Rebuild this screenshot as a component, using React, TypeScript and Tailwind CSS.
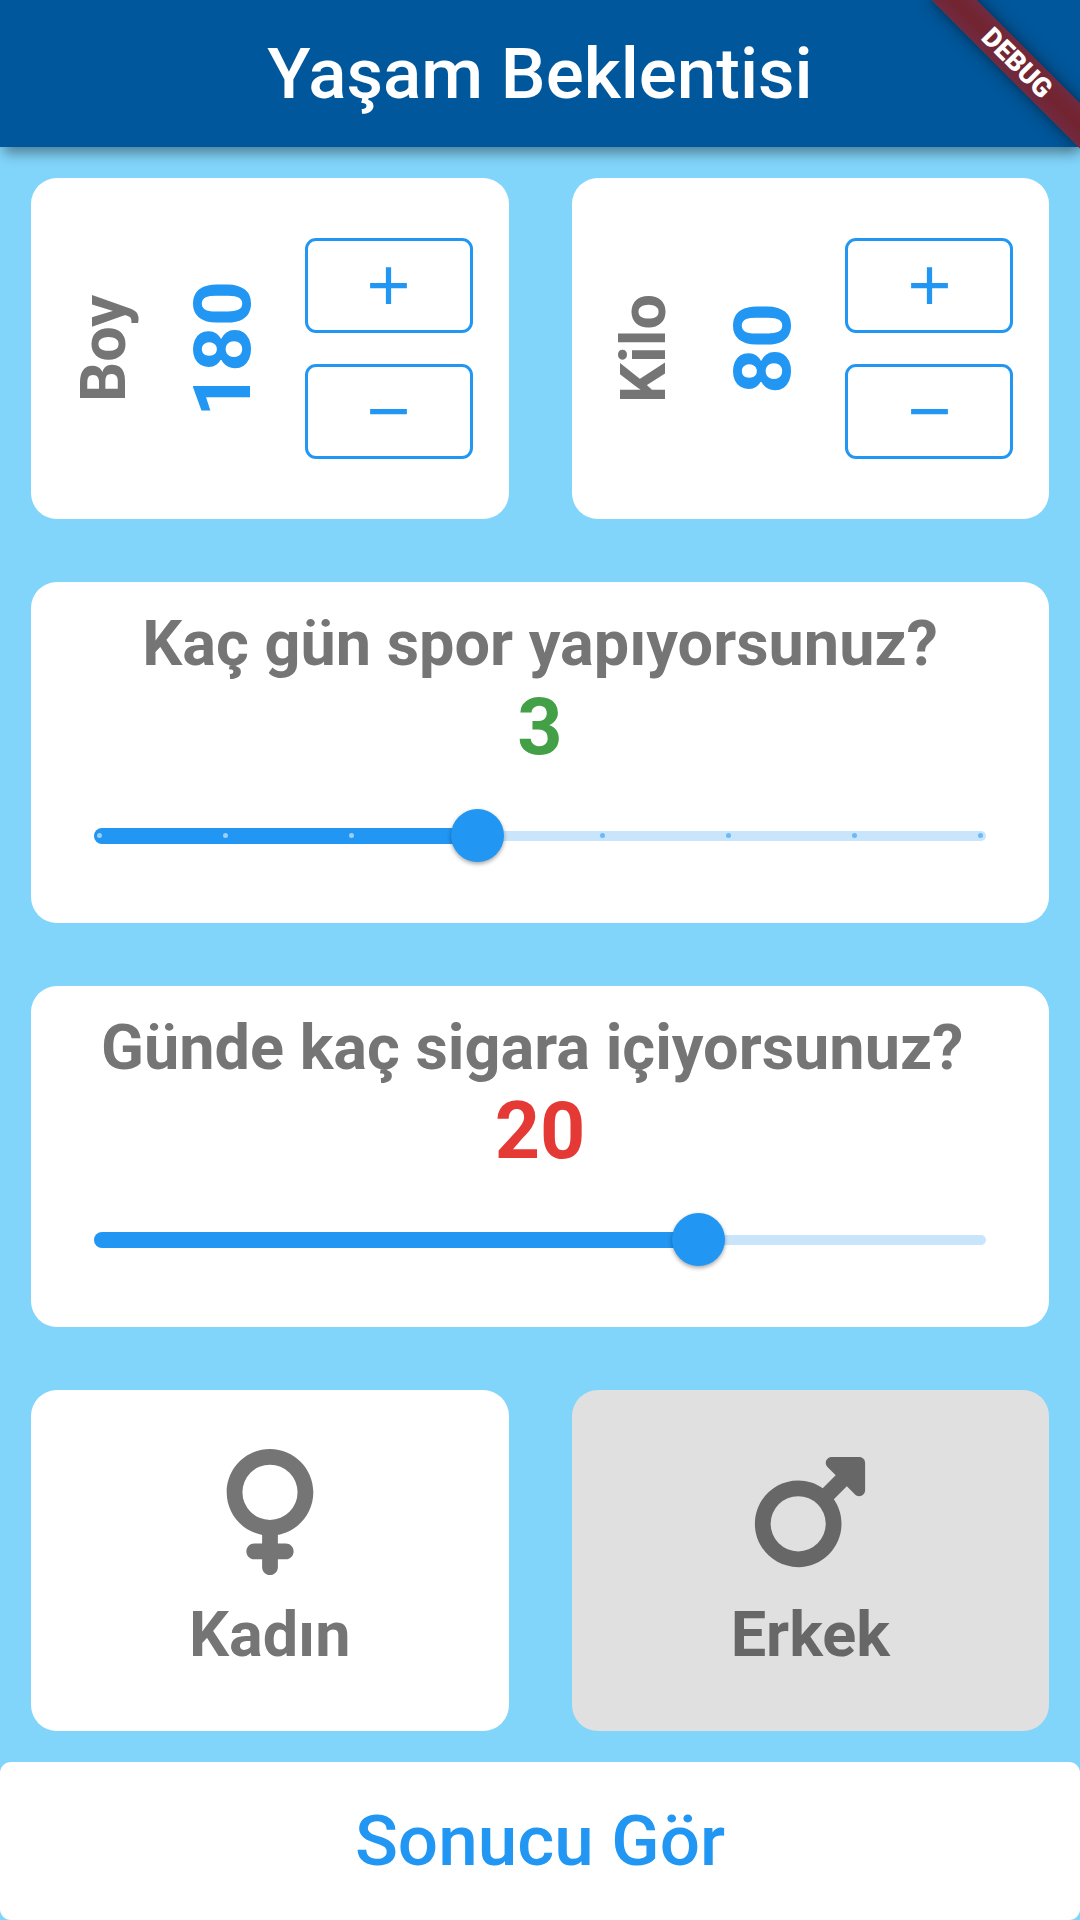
import { useState } from "react";
import type { ReactNode } from "react";
import { FaMars, FaVenus } from "react-icons/fa6";
import { MdAdd, MdRemove } from "react-icons/md";

const card = "rounded-[26px] bg-white";
const stepButton =
  "flex h-[95px] w-[168px] items-center justify-center rounded-[11px] border-[3px] border-[#2196f3] text-[63px] text-[#2196f3]";

function DebugBanner() {
  return (
    <div className="pointer-events-none absolute -right-[42px] top-[47px] z-20 flex h-8 w-[210px] rotate-45 items-center justify-center bg-linear-to-b from-[#712a40] via-[#72242f] to-[#712a40] text-[27px] leading-8 font-black text-white shadow-[0_0_16px_rgba(0,0,0,0.5)]">
      DEBUG
    </div>
  );
}

function Stepper({ label, initial }: { label: string; initial: number }) {
  const [value, setValue] = useState(initial);
  return (
    <section className={`flex items-center justify-evenly ${card}`}>
      <h2 className="rotate-180 text-[63px] leading-[74px] font-bold text-[#757575] [writing-mode:vertical-rl]">
        {label}
      </h2>
      <output className="rotate-180 text-[79px] leading-[92px] font-bold text-[#2196f3] [writing-mode:vertical-rl]">
        {value}
      </output>
      <div className="flex flex-col gap-[31px]">
        <button type="button" aria-label={`${label} artır`} className={stepButton} onClick={() => setValue(value + 1)}>
          <MdAdd />
        </button>
        <button type="button" aria-label={`${label} azalt`} className={stepButton} onClick={() => setValue(value - 1)}>
          <MdRemove />
        </button>
      </div>
    </section>
  );
}

type SliderCardProps = {
  id: string;
  label: string;
  initial: number;
  max: number;
  step: number | "any";
  valueClass: string;
  ticks?: boolean;
};

function SliderCard({ id, label, initial, max, step, valueClass, ticks }: SliderCardProps) {
  const [value, setValue] = useState(initial);
  return (
    <section className={`flex flex-col items-center justify-center px-[42px] ${card}`}>
      <label
        htmlFor={id}
        className="text-center text-[63px] leading-[74px] font-bold whitespace-pre text-[#757575]"
      >
        {label}
      </label>
      <output htmlFor={id} className={`text-[79px] leading-[92px] font-bold ${valueClass}`}>
        {Math.round(value)}
      </output>
      <div className="grid h-[126px] w-full items-center *:[grid-area:1/1]">
        <div className="mx-[21px] h-[10px] rounded-full bg-[#c9e5fc]" />
        <div className="mx-[21px]">
          <div className="h-4 rounded-l-full bg-[#2196f3]" style={{ width: `${(value / max) * 100}%` }} />
        </div>
        {ticks && (
          <div className="mx-[21px] flex justify-between px-[3px]">
            {Array.from({ length: max + 1 }, (_, i) => (
              <span key={i} className={`size-[5px] rounded-full ${i <= value ? "bg-[#99cffa]" : "bg-[#6db9f7]"}`} />
            ))}
          </div>
        )}
        <input
          id={id}
          type="range"
          min={0}
          max={max}
          step={step}
          value={value}
          onChange={(e) => setValue(Number(e.target.value))}
          className="h-[53px] w-full appearance-none bg-transparent [&::-webkit-slider-thumb]:size-[53px] [&::-webkit-slider-thumb]:appearance-none [&::-webkit-slider-thumb]:rounded-full [&::-webkit-slider-thumb]:bg-[#2196f3] [&::-webkit-slider-thumb]:shadow-[0_2px_4px_rgba(0,0,0,0.35)]"
        />
      </div>
    </section>
  );
}

type GenderProps = { label: string; icon: ReactNode; selected: boolean; onSelect: () => void };

function GenderButton({ label, icon, selected, onSelect }: GenderProps) {
  return (
    <button
      type="button"
      aria-pressed={selected}
      onClick={onSelect}
      className={`flex flex-col items-center justify-center gap-[23px] rounded-[26px] ${
        selected ? "bg-[#e0e0e0] text-[#676767]" : "bg-white text-[#757575]"
      }`}
    >
      <span className="text-[126px]">{icon}</span>
      <span className="text-[63px] leading-[74px] font-bold">{label}</span>
    </button>
  );
}

export default function App() {
  const [gender, setGender] = useState("Erkek");
  return (
    <div className="relative flex min-h-screen flex-col overflow-hidden bg-[#81d4fa] font-[Roboto,sans-serif]">
      <header className="flex h-[147px] items-center justify-center bg-[#01579b] shadow-[0_10px_12px_-4px_rgba(0,0,0,0.4)]">
        <h1 className="text-[71px] leading-[82px] font-medium text-white">Yaşam Beklentisi</h1>
      </header>
      <DebugBanner />

      <main className="grid flex-1 auto-rows-fr gap-[63px] px-[31px] py-[31px]">
        <div className="grid grid-cols-2 gap-[63px]">
          <Stepper label="Boy" initial={180} />
          <Stepper label="Kilo" initial={80} />
        </div>
        <SliderCard
          id="sport"
          label="Kaç gün spor yapıyorsunuz?"
          initial={3}
          max={7}
          step={1}
          valueClass="text-[#43a047]"
          ticks
        />
        <SliderCard
          id="cigarettes"
          label="Günde kaç sigara içiyorsunuz? "
          initial={20.4}
          max={30}
          step="any"
          valueClass="text-[#e53935]"
        />
        <div className="grid grid-cols-2 gap-[63px]">
          <GenderButton
            label="Kadın"
            icon={<FaVenus />}
            selected={gender === "Kadın"}
            onSelect={() => setGender("Kadın")}
          />
          <GenderButton
            label="Erkek"
            icon={<FaMars />}
            selected={gender === "Erkek"}
            onSelect={() => setGender("Erkek")}
          />
        </div>
      </main>

      <button
        type="button"
        className="h-[158px] w-full rounded-[11px] bg-white text-[71px] leading-[82px] font-medium text-[#2196f3]"
      >
        Sonucu Gör
      </button>
    </div>
  );
}
